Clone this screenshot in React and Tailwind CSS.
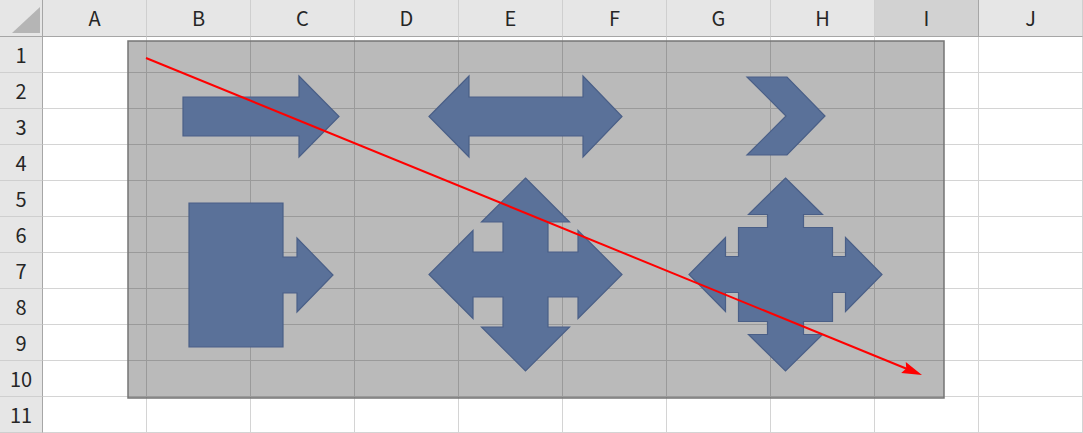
import React from 'react'

const COLS = ['A', 'B', 'C', 'D', 'E', 'F', 'G', 'H', 'I', 'J']
const ROWS = [1, 2, 3, 4, 5, 6, 7, 8, 9, 10, 11]
const SELECTED_COL = 'I'

const SHAPE_FILL = '#5a7199'
const SHAPE_STROKE = '#4a5f87'

// quad arrow (cross with four heads)
function quadArrow(cx, cy, T, B, H, S) {
  const p = [
    [0, -T], [H, -B], [S, -B], [S, -S], [B, -S], [B, -H], [T, 0], [B, H], [B, S], [S, S], [S, B], [H, B],
    [0, T], [-H, B], [-S, B], [-S, S], [-B, S], [-B, H], [-T, 0], [-B, -H], [-B, -S], [-S, -S], [-S, -B], [-H, -B],
  ]
  return p.map(([x, y]) => `${cx + x},${cy + y}`).join(' ')
}

// quad arrow callout (box in the middle)
function quadCallout(cx, cy, T, B, H, S, X) {
  const p = [
    [0, -T], [H, -B], [S, -B], [S, -X], [X, -X], [X, -S], [B, -S], [B, -H], [T, 0], [B, H], [B, S], [X, S], [X, X], [S, X], [S, B], [H, B],
    [0, T], [-H, B], [-S, B], [-S, X], [-X, X], [-X, S], [-B, S], [-B, H], [-T, 0], [-B, -H], [-B, -S], [-X, -S], [-X, -X], [-S, -X], [-S, -B], [-H, -B],
  ]
  return p.map(([x, y]) => `${cx + x},${cy + y}`).join(' ')
}

const SHAPES = [
  '183,97 299,97 299,76 339,116.5 299,157 299,136 183,136',
  '429,116.5 469,76 469,97 583,97 583,76 622,116.5 583,157 583,136 469,136 469,157',
  '747,77 787,77 825,116 787,155 747,155 786,116',
  '189,203 283,203 283,257 297,257 297,238 333,275 297,312 297,293 283,293 283,347 189,347',
  quadArrow(525.5, 274.5, 96.5, 52.5, 44, 22.5),
  quadCallout(785.5, 274.5, 96.5, 60, 37, 18, 47),
]

function Drawing() {
  // red connector arrow
  const x1 = 146, y1 = 58, x2 = 922, y2 = 375
  const len = Math.hypot(x2 - x1, y2 - y1)
  const ux = (x2 - x1) / len, uy = (y2 - y1) / len
  const bx = x2 - ux * 20, by = y2 - uy * 20
  const head = `${x2},${y2} ${bx - uy * 6},${by + ux * 6} ${bx + ux * 3},${by + uy * 3} ${bx + uy * 6},${by - ux * 6}`

  return (
    <svg className="absolute left-0 top-0 pointer-events-none" width="1083" height="433">
      <rect x="128" y="41" width="816" height="357" fill="#000" fillOpacity="0.27" stroke="#757575" strokeWidth="1.5" />
      {SHAPES.map((pts, i) => (
        <polygon key={i} points={pts} fill={SHAPE_FILL} stroke={SHAPE_STROKE} strokeWidth="1.2" />
      ))}
      <line x1={x1} y1={y1} x2={bx + ux * 4} y2={by + uy * 4} stroke="#ff0000" strokeWidth="2" />
      <polygon points={head} fill="#ff0000" />
    </svg>
  )
}

export default function App() {
  return (
    <div className="relative w-[1083px] h-[433px] overflow-hidden bg-white font-['Noto_Sans_CJK_JP','Noto_Sans',sans-serif] text-[#262626]">
      <div className="grid grid-cols-[43px_repeat(10,104px)] grid-rows-[37px_repeat(11,36px)]">
        {/* corner */}
        <div className="relative bg-[#e6e6e6] border-r border-b border-r-[#a6a6a6] border-b-[#a6a6a6]">
          <svg className="absolute left-[12px] top-[7px]" width="28" height="26">
            <polygon points="28,0 28,26 0,26" fill="#b5b5b5" />
          </svg>
        </div>

        {/* column headers */}
        {COLS.map(c => (
          <div
            key={c}
            className={`flex items-center justify-center text-[20px] leading-none border-b border-b-[#a6a6a6] border-r ${
              c === SELECTED_COL ? 'bg-[#d2d2d2] border-r-[#a6a6a6]' : 'bg-[#e6e6e6] border-r-[#cfcfcf]'
            }`}
          >
            {c}
          </div>
        ))}

        {/* rows */}
        {ROWS.map(r => (
          <React.Fragment key={r}>
            <div className="flex items-center justify-center text-[20px] leading-none bg-[#e6e6e6] border-r border-r-[#a6a6a6] border-b border-b-[#cfcfcf]">
              {r}
            </div>
            {COLS.map(c => (
              <div key={c} className="border-r border-b border-[#d4d4d4]" />
            ))}
          </React.Fragment>
        ))}
      </div>

      <Drawing />
    </div>
  )
}
